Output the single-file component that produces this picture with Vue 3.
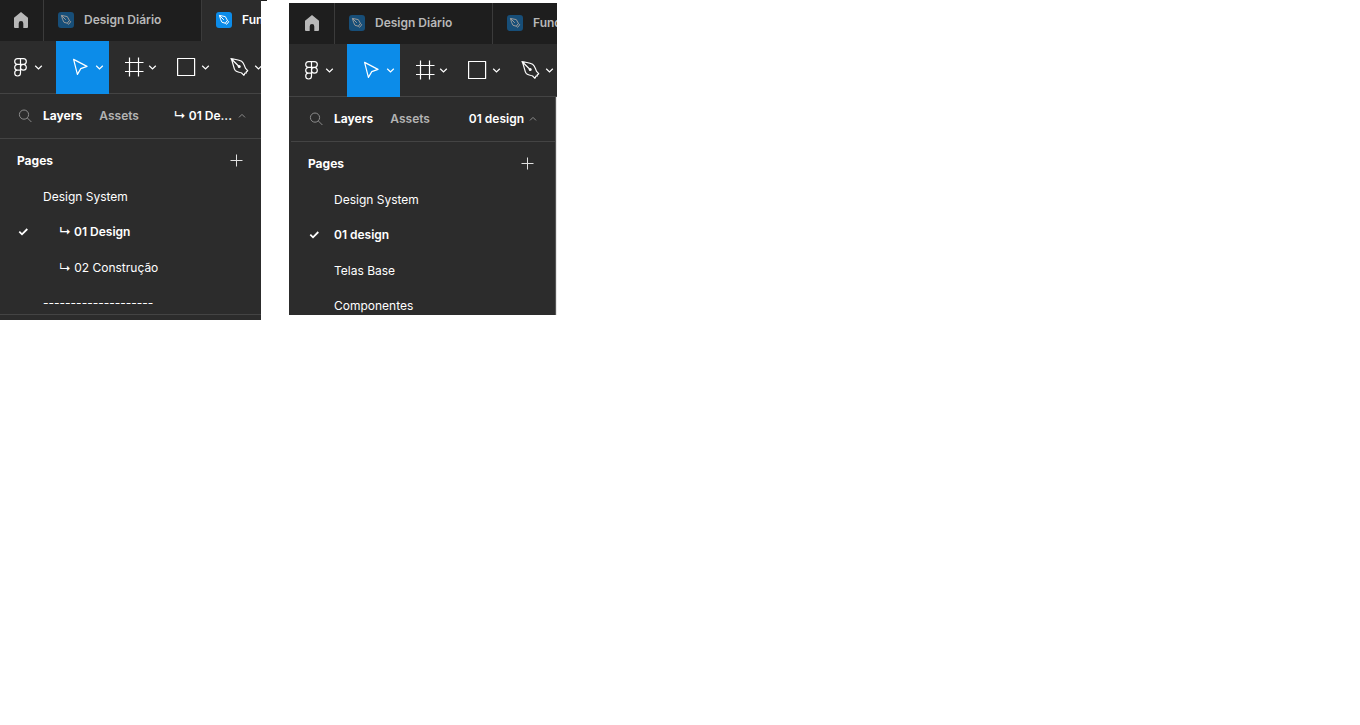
<script setup>
const tools = [
  { id: 'menu', label: 'Main menu' },
  { id: 'move', label: 'Move' },
  { id: 'frame', label: 'Frame' },
  { id: 'shape', label: 'Rectangle' },
  { id: 'pen', label: 'Pen' },
]

const panels = [
  {
    id: 'first',
    fileActive: true,
    file: 'Fundamentos',
    current: '↳ 01 De...',
    footer: true,
    pages: [
      { name: 'Design System' },
      { name: '↳ 01 Design', nested: true, selected: true },
      { name: '↳ 02 Construção', nested: true },
      { name: '--------------------' },
    ],
  },
  {
    id: 'second',
    fileActive: false,
    file: 'Fundamentos',
    current: '01 design',
    footer: false,
    pages: [
      { name: 'Design System' },
      { name: '01 design', selected: true },
      { name: 'Telas Base' },
      { name: 'Componentes' },
    ],
  },
]
</script>

<template>
  <main class="canvas">
    <section v-for="panel in panels" :key="panel.id" class="panel" :class="panel.id">
      <div class="window">
        <nav class="tabs">
          <button class="home" aria-label="Home">
            <svg width="16" height="16" viewBox="0 0 16 16"><path d="M8 0 15 5.8V15a1 1 0 0 1-1 1H10.300V11.400a2.300 2.300 0 0 0-4.600 0V16H2a1 1 0 0 1-1-1V5.8Z" fill="#b8b8b8" /></svg>
          </button>
          <button
            v-for="(title, i) in ['Design Diário', panel.file]"
            :key="title"
            class="tab"
            :class="{ active: i === 1 && panel.fileActive }"
          >
            <svg class="badge" width="16" height="16" viewBox="0 0 16 16">
              <rect class="badge-bg" width="16" height="16" rx="3" />
              <g class="badge-pen" fill="none" stroke-linejoin="round">
                <path d="M3.4 3.4 9.3 4.6 11.4 8.4 12.700 9.800 10.600 12.300 9.300 11.200 6 10.300 4.700 7.700Z" />
                <path d="M3.4 3.4 7.8 7.8M9.300 11.200 11.400 8.400" />
              </g>
            </svg>
            <span>{{ title }}</span>
          </button>
        </nav>

        <div class="toolbar">
          <button v-for="tool in tools" :key="tool.id" class="tool" :class="tool.id" :aria-label="tool.label">
            <svg width="21" height="21" viewBox="0 0 21 21" fill="none" stroke="#fff" stroke-width="1.2" stroke-linejoin="round">
              <path v-if="tool.id === 'menu'" d="M10.5 1.6H7.6a2.9 2.9 0 0 0 0 5.8h2.9ZM10.5 1.6h2.9a2.9 2.9 0 0 1 0 5.8h-2.9ZM10.5 7.4H7.6a2.9 2.9 0 0 0 0 5.8h2.9ZM13.4 7.4a2.9 2.9 0 1 1 0 5.8 2.9 2.9 0 0 1 0-5.8ZM10.5 13.2H7.6a2.9 2.9 0 1 0 2.9 2.9Z" />
              <path v-else-if="tool.id === 'move'" d="M2.6 2.4 16 9.4 9.8 11.6 6.4 17.4Z" />
              <path v-else-if="tool.id === 'frame'" d="M5.5 .5v19M14.5 .5v19M1 5.5h18.5M1 14.5h18.5" />
              <rect v-else-if="tool.id === 'shape'" x=".6" y="1.5" width="17" height="17" />
              <g v-else>
                <path d="M1 1.5C4.500 2.400 9 2.500 11.600 4.200 14.300 6 14.300 9.200 15.600 11.400L17.700 13.700 16.200 15 16.300 16 14.900 16.200 13.900 18.300 11.800 16.100C9.600 14.900 7.200 15.600 5.400 13.700 3.200 11.200 3.600 6 1 1.500L8.800 9.200" />
                <circle cx="9.2" cy="9.5" r="1.5" fill="#fff" stroke="none" />
              </g>
            </svg>
            <svg width="9" height="9" viewBox="0 0 9 9" fill="none" stroke="#fff" stroke-width="1.2"><path d="m1.2 2.7 3.3 3.2 3.3-3.2" /></svg>
          </button>
        </div>

        <div class="sidebar">
          <div class="switcher">
            <button class="search" aria-label="Search">
              <svg width="14" height="14" viewBox="0 0 14 14" fill="none" stroke="#8c8c8c"><circle cx="6" cy="5.6" r="4.6" /><path d="m9.400 9 4 4" /></svg>
            </button>
            <button class="strong">Layers</button>
            <button class="assets">Assets</button>
            <button class="current">
              <span>{{ panel.current }}</span>
              <svg width="8" height="8" viewBox="0 0 8 8" fill="none" stroke="#8c8c8c"><path d="m1 5.4 3-3 3 3" /></svg>
            </button>
          </div>

          <header class="pages-head">
            <h2>Pages</h2>
            <button aria-label="Add page">
              <svg width="13" height="13" viewBox="0 0 13 13" stroke="#e0e0e0"><path d="M6.5.5v12M.5 6.5h12" /></svg>
            </button>
          </header>

          <ul class="pages">
            <li v-for="page in panel.pages" :key="page.name" :class="{ nested: page.nested, selected: page.selected }">
              <span class="mark">
                <svg v-if="page.selected" width="10" height="8" viewBox="0 0 10 8" fill="none" stroke="#fff" stroke-width="1.8"><path d="m1.300 3.700 2.7 2.6L9.300 1" /></svg>
              </span>
              <span>{{ page.name }}</span>
            </li>
          </ul>
          <div v-if="panel.footer" class="footer"></div>
        </div>
      </div>
    </section>
  </main>
</template>

<style>
body {
  margin: 0;
  background: #fff;
}
</style>

<style scoped>
.canvas {
  display: flex;
  align-items: flex-start;
  gap: 28px;
  font: 500 12px/16px Inter, "Liberation Sans", sans-serif;
  color: #fff;
}
button {
  display: flex;
  align-items: center;
  flex: none;
  box-sizing: border-box;
  margin: 0;
  padding: 0;
  border: 0;
  background: none;
  color: inherit;
  font: inherit;
  white-space: nowrap;
}
svg {
  display: block;
  flex: none;
}
.panel {
  position: relative;
  flex: 0 1 261px;
  min-width: 0;
}
.panel.first::after {
  content: "";
  position: absolute;
  top: 0;
  left: 100%;
  width: 6px;
  height: 1px;
  background: #1e1e1e;
}
.panel.second {
  flex-basis: 268px;
  margin-top: 3px;
}
.window {
  overflow: hidden;
  background: #2c2c2c;
}
.second .window {
  background: linear-gradient(#2c2c2c 94px, #e6e6e6 94px);
}
.tabs {
  display: flex;
  height: 41px;
  background: #1e1e1e;
}
.second .tabs,
.second .toolbar {
  padding-left: 2px;
}
.home {
  width: 44px;
  padding: 0 0 1px 13px;
  border-right: 1px solid #3b3b3b;
}
.tab {
  gap: 10px;
  width: 158px;
  padding: 0 0 1px 14px;
  border-right: 1px solid #3b3b3b;
  color: #b8b8b8;
  font-weight: 600;
}
.tab.active {
  background: #2c2c2c;
  color: #fff;
}
.badge-bg {
  fill: #174e78;
}
.badge-pen {
  stroke: #9a9a9a;
}
.active .badge-bg {
  fill: #0c8ce9;
}
.active .badge-pen {
  stroke: #fff;
}
.toolbar {
  display: flex;
  height: 53px;
  box-shadow: inset 0 -1px #444;
}
.tool {
  gap: 3px;
  width: 53px;
  padding-left: 15px;
}
.tool.menu {
  width: 56px;
  padding-left: 10px;
}
.tool.move {
  background: #0c8ce9;
}
.second .sidebar {
  box-sizing: border-box;
  margin-right: 1px;
  padding: 0 0 0 2px;
  border-right: 1px solid #555;
  background: #2c2c2c;
}
.switcher {
  display: flex;
  align-items: center;
  box-sizing: border-box;
  height: 45px;
  padding: 0 15px 0 18px;
  border-bottom: 1px solid #444;
}
.second .switcher {
  padding-right: 18px;
}
.search {
  width: 25px;
}
.strong,
h2 {
  font-weight: 700;
}
.assets {
  margin-left: 17px;
  color: #b3b3b3;
  font-weight: 600;
}
.current {
  gap: 6px;
  margin-left: auto;
  font-weight: 600;
}
.second .current {
  gap: 5px;
}
.pages-head {
  display: flex;
  align-items: center;
  justify-content: space-between;
  box-sizing: border-box;
  height: 40px;
  padding: 3px 18px 0 17px;
}
.second .pages-head {
  padding-right: 21px;
}
h2 {
  margin: 0;
  font-size: 12px;
}
.pages {
  display: grid;
  grid-auto-rows: 35px 36px;
  max-height: 135px;
  margin: 0;
  padding: 0;
  overflow: hidden;
  list-style: none;
  font-weight: 400;
}
.second .pages {
  max-height: 133px;
}
.pages li {
  display: flex;
  align-items: center;
  padding-left: 18px;
  white-space: nowrap;
}
.mark {
  width: 25px;
}
.nested .mark {
  width: 41px;
}
.pages .selected {
  font-weight: 600;
}
.footer {
  height: 5px;
  border-top: 1px solid #444;
}
</style>
